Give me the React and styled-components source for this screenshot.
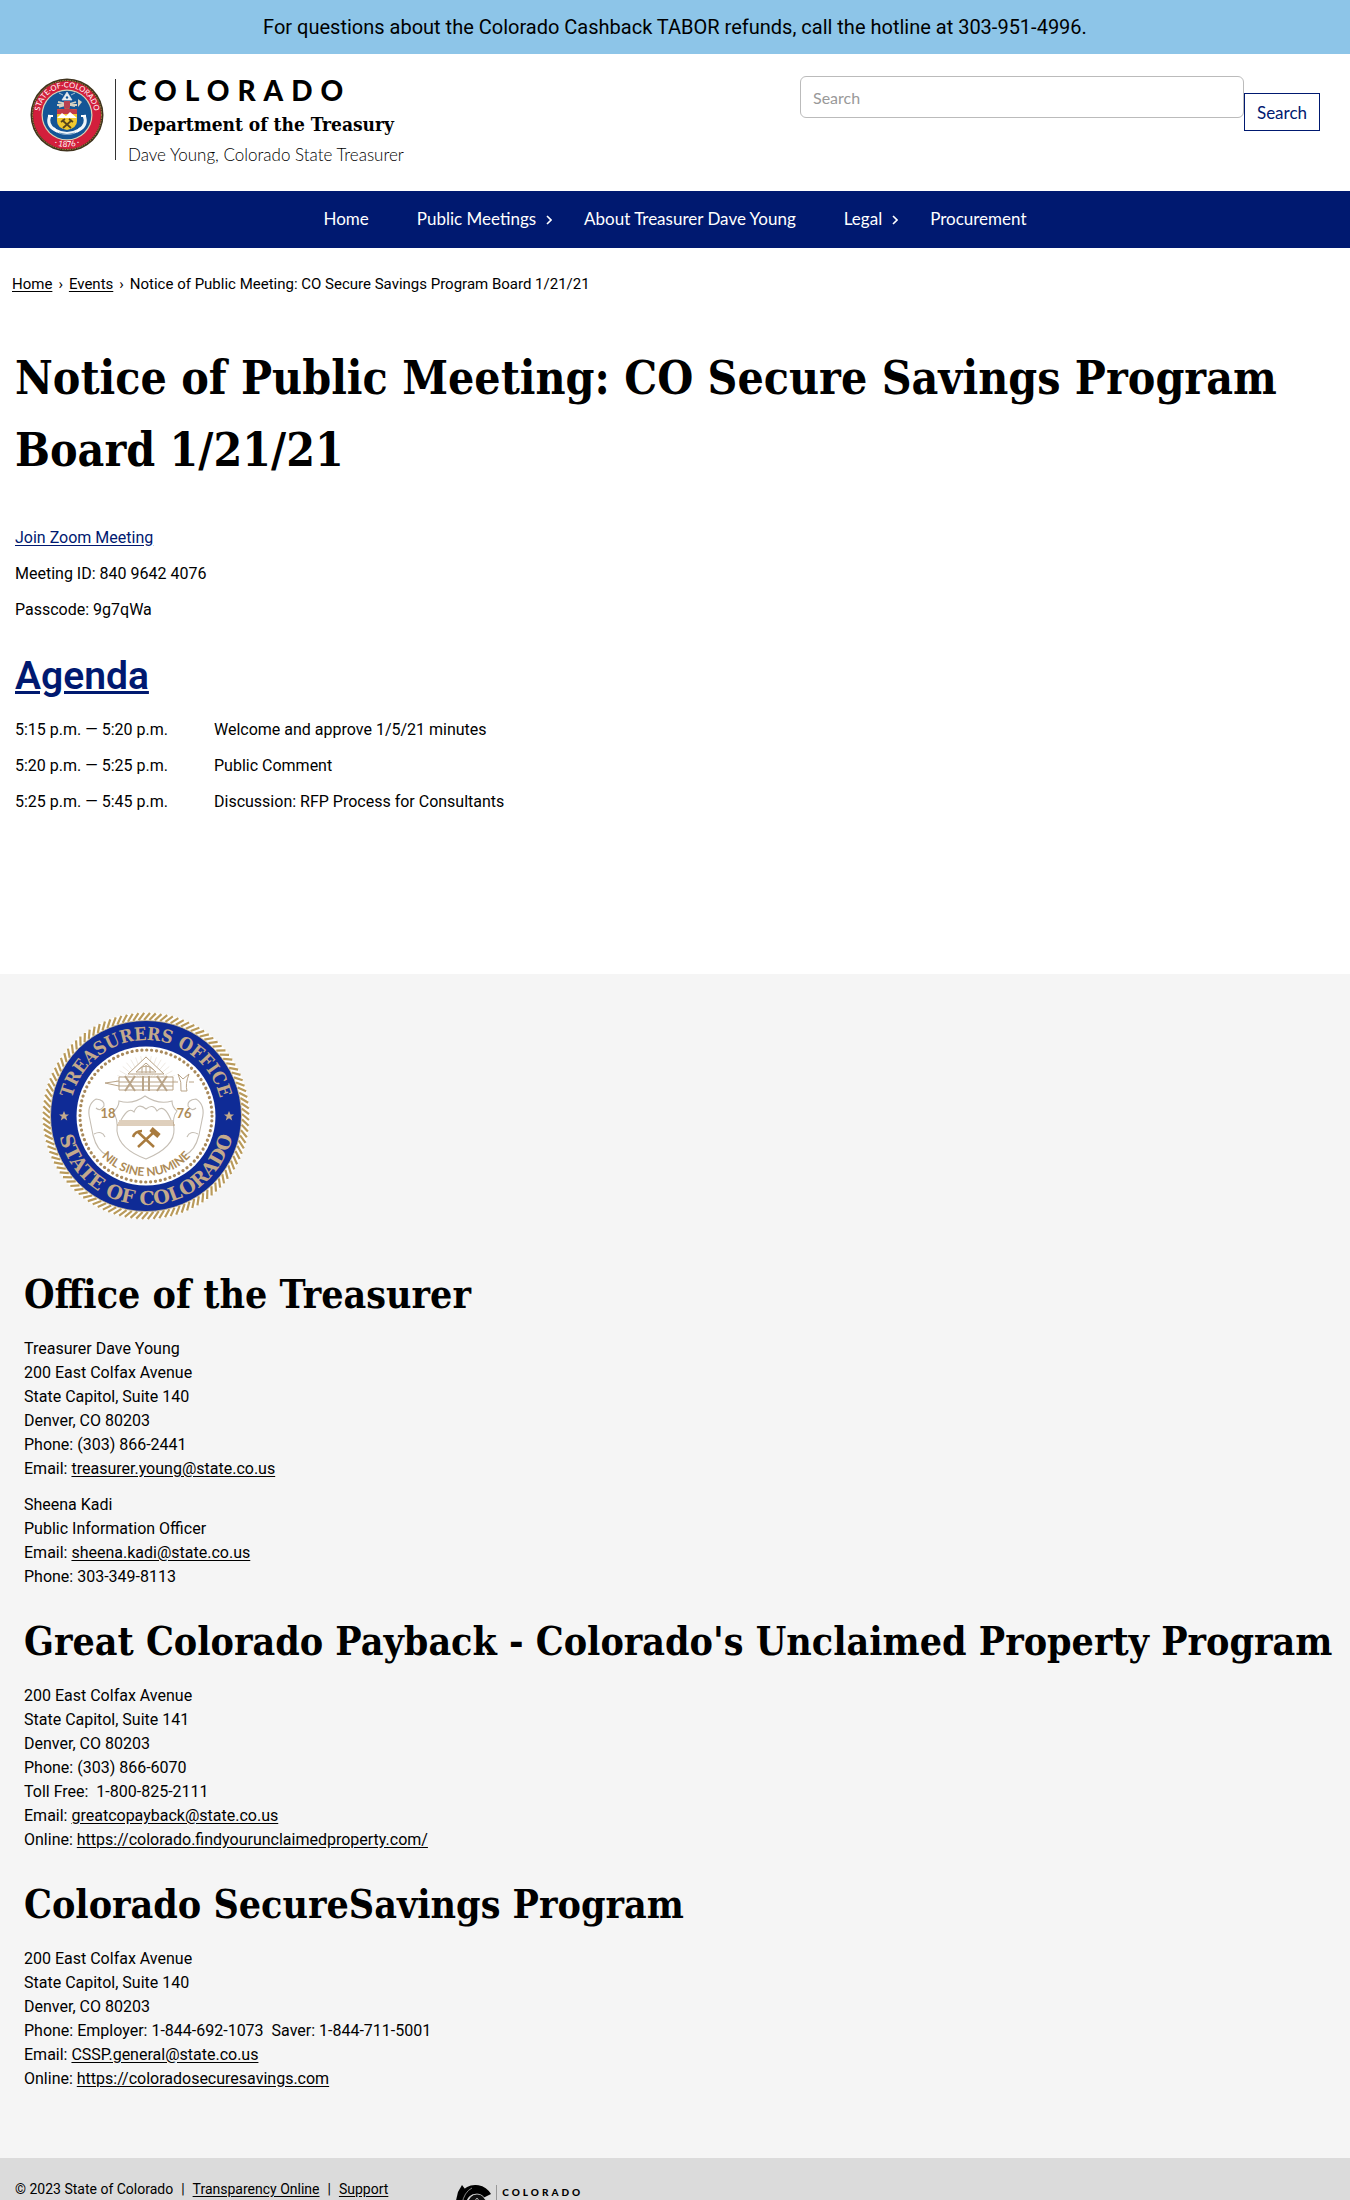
import React from 'react';
import styled, { createGlobalStyle } from 'styled-components';

const sans = 'Roboto, "Trebuchet MS", sans-serif';
const navSans = 'Lato, "Noto Sans", sans-serif';
const slab = '"DejaVu Serif Condensed", "DejaVu Serif", serif';
const wideSlab = '"DejaVu Serif", serif';
const navy = '#001970';

const GlobalStyle = createGlobalStyle`
  *, *::before, *::after { box-sizing: border-box; }
  body {
    margin: 0;
    background: #fff;
    color: #000;
    font-family: ${sans};
    font-size: 16px;
    line-height: 24px;
  }
`;

const Banner = styled.aside`
  padding: 13px 16px;
  background: #8dc5e8;
  font-size: 20px;
  line-height: 28px;
  text-align: center;
`;

const Header = styled.header`
  display: flex;
  justify-content: space-between;
  align-items: flex-start;
  gap: 32px;
  padding: 22px 30px 25px;
`;

const Brand = styled.a`
  display: flex;
  align-items: flex-start;
  color: #000;
  text-decoration: none;
`;

const Divider = styled.span`
  width: 1px;
  height: 81px;
  margin: 3px 12px 0 11px;
  background: #333;
`;

const BrandText = styled.span`
  display: flex;
  flex-direction: column;
`;

const StateName = styled.span`
  font: 900 28px/28px ${navSans};
  letter-spacing: 8px;
`;

const Department = styled.span`
  margin-top: 6px;
  font: bold 19px/28px ${slab};
`;

const Official = styled.span`
  margin-top: 6px;
  font: 300 17px/22px ${navSans};
`;

const SearchForm = styled.form`
  display: flex;
  flex: 0 1 520px;
  align-items: flex-start;
`;

const SearchInput = styled.input`
  flex: 1;
  min-width: 0;
  height: 42px;
  padding: 0 12px;
  border: 1px solid #bbb;
  border-radius: 6px;
  background: #fff;
  font: 16px ${navSans};
  &::placeholder { color: #999; opacity: 1; }
`;

const SearchButton = styled.button`
  margin-top: 17px;
  width: 76px;
  height: 38px;
  padding: 0;
  border: 1px solid ${navy};
  background: #fff;
  color: ${navy};
  font: 17px ${navSans};
`;

const Nav = styled.nav`
  background: ${navy};
`;

const NavList = styled.ul`
  display: flex;
  justify-content: center;
  flex-wrap: wrap;
  gap: 0 48px;
  margin: 0;
  padding: 16px 24px;
  list-style: none;
`;

const NavItem = styled.li`
  position: relative;
`;

const NavLink = styled.a`
  color: #fff;
  font: 17px/24px ${navSans};
  text-decoration: none;
`;

const Chevron = styled.svg`
  position: absolute;
  top: 8px;
  left: calc(100% + 10px);
`;

const Breadcrumb = styled.nav`
  display: flex;
  flex-wrap: wrap;
  gap: 6px;
  padding: 24px 12px;
  font-size: 15px;
`;

const TextLink = styled.a`
  color: ${(p) => p.$color || '#000'};
  text-underline-offset: 2px;
`;

const Main = styled.main`
  padding: 22px 15px 154px;
`;

const PageTitle = styled.h1`
  margin: 0 0 40px;
  font: bold 46px/72px ${slab};
`;

const Paragraph = styled.p`
  margin: 0 0 12px;
`;

const AgendaTitle = styled.h2`
  margin: 24px 0 6px;
  color: ${navy};
  font: 600 39px/60px ${sans};
`;

const AgendaTable = styled.table`
  border-collapse: collapse;
`;

const Time = styled.th`
  min-width: 199px;
  padding: 6px 38px 6px 0;
  font-weight: normal;
  text-align: left;
  white-space: nowrap;
`;

const Topic = styled.td`
  padding: 6px 0;
`;

const Contact = styled.section`
  padding: 20px 16px 55px 24px;
  background: #f5f5f5;
`;

const SealBox = styled.div`
  display: flex;
  padding-bottom: 4px;
`;

const OfficeTitle = styled.h2`
  margin: 23px 0 14px;
  font: bold 39px/58px ${slab};
`;

const Address = styled.address`
  margin-bottom: 12px;
  font-style: normal;
`;

const Line = styled.div`
  white-space: pre-wrap;
`;

const Footer = styled.footer`
  display: flex;
  align-items: flex-start;
  gap: 66px;
  padding: 19px 15px 24px;
  background: #dbdbdb;
  font-size: 14px;
`;

const FooterLinks = styled.div`
  display: flex;
  gap: 8px;
`;

const FooterBrand = styled.a`
  display: flex;
  align-items: flex-start;
  margin-top: 8px;
  color: #000;
  text-decoration: none;
`;

const FooterBrandText = styled.span`
  height: 40px;
  margin-left: 4px;
  padding-left: 5px;
  border-left: 1px solid #999;
  font: 900 10px/15px ${navSans};
  letter-spacing: 3px;
`;

function StateSeal() {
  return (
    <svg width="74" height="80" viewBox="0 0 74 80" role="img" aria-label="Seal of the State of Colorado">
      <defs>
        <path id="state-top" d="M9.5 39a27.5 27.5 0 0 1 55 0" />
        <path id="state-base" d="M5 39a32 32 0 0 0 64 0" />
      </defs>
      <circle cx="37" cy="39" r="36.5" fill="#40331e" />
      <circle cx="37" cy="39" r="34.5" fill="none" stroke="#c3a94c" strokeWidth="0.8" strokeDasharray="1.5 1" />
      <circle cx="37" cy="39" r="34" fill="#d31f3c" />
      <circle cx="37" cy="39" r="25.5" fill="#d9d5b8" />
      <circle cx="37" cy="39" r="24.3" fill="#145596" />
      <g fill="#fff" fontFamily={navSans} fontWeight="400" textAnchor="middle">
        <text fontSize="7.6"><textPath href="#state-top" startOffset="50%">STATE·OF·COLORADO</textPath></text>
        <text fontSize="8"><textPath href="#state-base" startOffset="50%">· 1876 ·</textPath></text>
      </g>
      <path d="M37 16l5 8H32zM33 19l-4-2M41 19l4-2" fill="#e8edf0" stroke="#e8edf0" strokeWidth="0.7" />
      <circle cx="37" cy="21.5" r="1.2" fill="#145596" />
      <path d="M27 29h20M28 26l17 4M29 31l17-5" stroke="#d8d2c0" strokeWidth="1.8" />
      <path d="M34 25h6v7h-6z" fill="#b84250" />
      <path d="M48 23l4 3-4 5z" fill="#d8d2c0" />
      <path d="M27 33q5 1 10-1 5 2 10 1v12q0 7-10 9-10-2-10-9z" fill="#f1c82e" />
      <path d="M27 33q5 1 10-1 5 2 10 1v5H27z" fill="#c23a46" />
      <path d="M27 42l5-5 4 3 4-4 7 6z" fill="#fff" />
      <path d="M32 44l9 8M42 44l-9 8M31 46l4-3M39 43l4 3" stroke="#57441b" strokeWidth="1.7" />
      <path d="M20 39q-4 10 5 15 12 7 24 0 9-5 5-15" fill="none" stroke="#eff5fa" strokeWidth="3" />
      <path d="M18 40h5M51 40h5M24 52l3 4M50 52l-3 4" stroke="#fff" strokeWidth="2" />
      <path d="M29 57q8 3 16 0" fill="none" stroke="#467bad" strokeWidth="0.8" />
    </svg>
  );
}

const star = '0,-5 1.5,-1.6 5,-1.6 2.2,0.8 3.2,4.4 0,2.2 -3.2,4.4 -2.2,0.8 -5,-1.6 -1.5,-1.6';

function TreasurerSeal() {
  const rope = Array.from({ length: 112 }, (_, i) => i * (360 / 112));
  const rays = Array.from({ length: 17 }, (_, i) => -80 + i * 10);
  return (
    <svg width="244" height="244" viewBox="-122 -122 244 244" role="img" aria-label="Seal of the Colorado Treasurer's Office">
      <defs>
        <path id="office-top" d="M-76 0a76 76 0 0 1 152 0" />
        <path id="office-base" d="M-89 0a89 89 0 0 0 178 0" />
        <path id="motto" d="M-60 0a60 60 0 0 0 120 0" />
      </defs>
      <circle r="100" fill="none" stroke="#fff" strokeWidth="7" />
      <g stroke="#b99a5a" strokeWidth="2.2">
        {rope.map((a) => (
          <line key={a} x1="-2" y1="-96" x2="4" y2="-103" transform={`rotate(${a})`} />
        ))}
      </g>
      <circle r="95.5" fill="#0f2b96" stroke="#d9c391" strokeWidth="0.8" />
      <circle r="69.5" fill="#fff" />
      <circle r="66" fill="none" stroke="#a98a5c" strokeWidth="3.2" strokeDasharray="0.1 4.84" strokeLinecap="round" />
      <g fill="#c3a98c" fontWeight="700" textAnchor="middle">
        <text fontFamily={slab} fontSize="18"><textPath href="#office-top" startOffset="50%">TREASURERS OFFICE</textPath></text>
        <text fontFamily={wideSlab} fontSize="19"><textPath href="#office-base" startOffset="50%">STATE OF COLORADO</textPath></text>
      </g>
      <polygon points={star} fill="#c3a98c" transform="translate(-82 0)" />
      <polygon points={star} fill="#c3a98c" transform="translate(83 0)" />
      <g stroke="#e6dfd5" strokeWidth="0.7">
        {rays.map((a) => (
          <line key={a} x1="0" y1="-12" x2="0" y2="-38" transform={`translate(0 -30) rotate(${a}) scale(1 .8)`} />
        ))}
      </g>
      <g fill="none" stroke="#b9a488" strokeWidth="1">
        <path d="M0-59l18 17h-36zM0-53l10 9h-20z" fill="#fff" />
        <path d="M-8-46q8-8 16 0M-4-49v6M0-51v8M4-49v6" />
        <path d="M-27-39h54v13h-54zM-27-34h54M-27-30h54" fill="#fff" />
        <path d="M-21-40l10 15M-11-40l-10 15M-3-40v15M3-40v15M11-40l10 15M21-40l-10 15" strokeWidth="2" />
        <path d="M-27-35l-14 2 14 3M27-34h5M32-42l5 5 6-5q-4 10-2 17h-6q1-9-3-17M43-34h5" />
      </g>
      <g fill="none" stroke="#c5beb4" strokeWidth="1.1">
        <path d="M-27-15q14 4 26-5 13 9 27 5 0 6 5 10-5 6-3 18Q29 31 0 43-27 33-29 15q1-13-4-19 6-5 6-11z" fill="#fff" />
        <path d="M-50-17q-10 6-6 21l3 15q4 16 14 20M-50-17q9 1 8 7-4 6-8 2M50-17q10 6 6 21l-3 15q-4 16-14 20M50-17q-9 1-8 7 4 6 8 2" />
        <path d="M-52 18q8-4 11 3M52 18q-8-4-11 3" />
        <path d="M-25 4q8-14 13-8 4-10 12-3 7-6 11 2 7-8 14 9" />
      </g>
      <path d="M-27 5h54M-28 7h56M-29 9h58" stroke="#bfa07b" strokeWidth="1" />
      <g stroke="#a97b3e" strokeWidth="2.5" fill="none">
        <path d="M-8 16l16 15M8 16l-16 15M-13 21q2-6 9-6" />
        <path d="M5 13l8 7" strokeWidth="5" />
      </g>
      <g fill="#ad8b57" fontFamily={navSans} fontWeight="700" textAnchor="middle">
        <text fontSize="13" x="-38" y="2">18</text>
        <text fontSize="13" x="38" y="2">76</text>
        <text fontSize="12"><textPath href="#motto" startOffset="50%">NIL SINE NUMINE</textPath></text>
      </g>
    </svg>
  );
}

function FooterMark() {
  return (
    <svg width="38" height="36" viewBox="0 0 38 36" aria-hidden="true">
      <path d="M0 24L4 7 8 0l3 4 1 4-6 18H0z" />
      <path d="M37 9A18 18 0 1 0 37 27l-8-4a9 9 0 1 1 0-10z" />
      <circle cx="23" cy="18" r="9" fill="#111" stroke="#dbdbdb" strokeWidth="0.8" />
      <path d="M17 21l6-8 6 8M20 17l3 2 3-2" fill="none" stroke="#dbdbdb" strokeWidth="0.8" />
      <path d="M8 19q2-12 10-16" fill="none" stroke="#dbdbdb" strokeWidth="0.6" />
    </svg>
  );
}

const navItems = [
  { label: 'Home' },
  { label: 'Public Meetings', menu: true },
  { label: 'About Treasurer Dave Young' },
  { label: 'Legal', menu: true },
  { label: 'Procurement' },
];

const agenda = [
  ['5:15 p.m. — 5:20 p.m.', 'Welcome and approve 1/5/21 minutes'],
  ['5:20 p.m. — 5:25 p.m.', 'Public Comment'],
  ['5:25 p.m. — 5:45 p.m.', 'Discussion: RFP Process for Consultants'],
];

const email = (address) => ({ label: 'Email: ', text: address, href: `mailto:${address}` });
const online = (url) => ({ label: 'Online: ', text: url, href: url });

const offices = [
  {
    title: 'Office of the Treasurer',
    blocks: [
      [
        'Treasurer Dave Young',
        '200 East Colfax Avenue',
        'State Capitol, Suite 140',
        'Denver, CO 80203',
        'Phone: (303) 866-2441',
        email('treasurer.young@state.co.us'),
      ],
      ['Sheena Kadi', 'Public Information Officer', email('sheena.kadi@state.co.us'), 'Phone: 303-349-8113'],
    ],
  },
  {
    title: "Great Colorado Payback - Colorado's Unclaimed Property Program",
    blocks: [
      [
        '200 East Colfax Avenue',
        'State Capitol, Suite 141',
        'Denver, CO 80203',
        'Phone: (303) 866-6070',
        'Toll Free:  1-800-825-2111',
        email('greatcopayback@state.co.us'),
        online('https://colorado.findyourunclaimedproperty.com/'),
      ],
    ],
  },
  {
    title: 'Colorado SecureSavings Program',
    blocks: [
      [
        '200 East Colfax Avenue',
        'State Capitol, Suite 140',
        'Denver, CO 80203',
        'Phone: Employer: 1-844-692-1073  Saver: 1-844-711-5001',
        email('CSSP.general@state.co.us'),
        online('https://coloradosecuresavings.com'),
      ],
    ],
  },
];

export default function App() {
  return (
    <>
      <GlobalStyle />
      <Banner>For questions about the Colorado Cashback TABOR refunds, call the hotline at 303-951-4996.</Banner>
      <Header>
        <Brand href="#">
          <StateSeal />
          <Divider />
          <BrandText>
            <StateName>COLORADO</StateName>
            <Department>Department of the Treasury</Department>
            <Official>Dave Young, Colorado State Treasurer</Official>
          </BrandText>
        </Brand>
        <SearchForm role="search">
          <SearchInput type="search" aria-label="Search" placeholder="Search" />
          <SearchButton type="submit">Search</SearchButton>
        </SearchForm>
      </Header>
      <Nav aria-label="Main">
        <NavList>
          {navItems.map((item) => (
            <NavItem key={item.label}>
              <NavLink href="#">{item.label}</NavLink>
              {item.menu && (
                <Chevron width="6" height="10" viewBox="0 0 6 10" aria-hidden="true">
                  <path d="M1 1l4 4-4 4" fill="none" stroke="#fff" strokeWidth="1.6" />
                </Chevron>
              )}
            </NavItem>
          ))}
        </NavList>
      </Nav>
      <Breadcrumb aria-label="Breadcrumb">
        <TextLink href="#">Home</TextLink>
        <span>›</span>
        <TextLink href="#">Events</TextLink>
        <span>›</span>
        <span>Notice of Public Meeting: CO Secure Savings Program Board 1/21/21</span>
      </Breadcrumb>
      <Main>
        <PageTitle>Notice of Public Meeting: CO Secure Savings Program Board 1/21/21</PageTitle>
        <Paragraph><TextLink href="#" $color={navy}>Join Zoom Meeting</TextLink></Paragraph>
        <Paragraph>Meeting ID: 840 9642 4076</Paragraph>
        <Paragraph>Passcode: 9g7qWa</Paragraph>
        <AgendaTitle><TextLink href="#" $color={navy}>Agenda</TextLink></AgendaTitle>
        <AgendaTable>
          <tbody>
            {agenda.map(([time, topic]) => (
              <tr key={time}>
                <Time scope="row">{time}</Time>
                <Topic>{topic}</Topic>
              </tr>
            ))}
          </tbody>
        </AgendaTable>
      </Main>
      <Contact>
        <SealBox><TreasurerSeal /></SealBox>
        {offices.map((office) => (
          <React.Fragment key={office.title}>
            <OfficeTitle>{office.title}</OfficeTitle>
            {office.blocks.map((lines, b) => (
              <Address key={b}>
                {lines.map((line, i) => (
                  <Line key={i}>
                    {line.href ? <>{line.label}<TextLink href={line.href}>{line.text}</TextLink></> : line}
                  </Line>
                ))}
              </Address>
            ))}
          </React.Fragment>
        ))}
      </Contact>
      <Footer>
        <FooterLinks>
          <span>© 2023 State of Colorado</span>
          <span>|</span>
          <TextLink href="#">Transparency Online</TextLink>
          <span>|</span>
          <TextLink href="#">Support</TextLink>
        </FooterLinks>
        <FooterBrand href="#">
          <FooterMark />
          <FooterBrandText>COLORADO</FooterBrandText>
        </FooterBrand>
      </Footer>
    </>
  );
}
